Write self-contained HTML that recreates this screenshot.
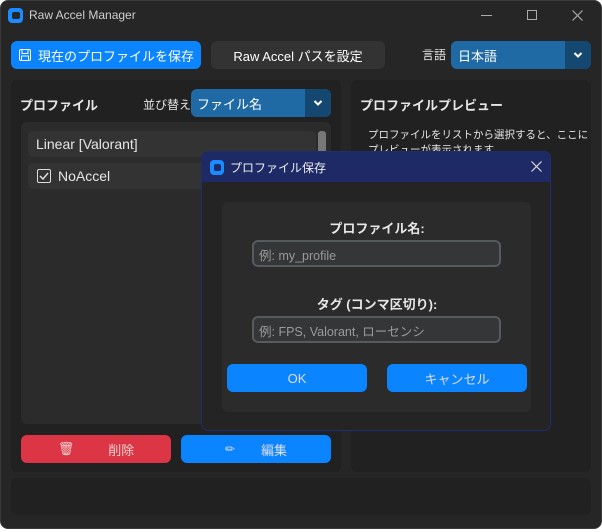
<!DOCTYPE html>
<html><head><meta charset="utf-8"><style>
*{box-sizing:border-box;margin:0;padding:0}
body{width:602px;height:532px;background:#fff;font-family:"Liberation Sans","Noto Sans CJK JP",sans-serif;color:#e6e6e6;position:relative;overflow:hidden}
.a{position:absolute}
.win{left:0;top:0;width:602px;height:529px;background:#262626;border-radius:8px;border:1px solid #3a3a3a}
.btn{position:absolute;display:flex;align-items:center;justify-content:center;border-radius:6px;font-size:13px;color:#fff}
.blue{background:#0a84ff}
.t{position:absolute;white-space:nowrap}
</style></head><body>
<div class="a win"></div>
<div class="a" style="left:8px;top:8px;width:15px;height:15px;background:#1a8cff;border-radius:4px"></div>
<div class="a" style="left:12px;top:12px;width:8px;height:7px;background:#262626;border-radius:2px"></div>
<div class="t" style="left:29px;top:8px;font-size:12px;color:#cfcfcf">Raw Accel Manager</div>
<div class="a" style="left:481px;top:15px;width:11px;height:1px;background:#aaa"></div>
<div class="a" style="left:527px;top:10px;width:10px;height:10px;border:1px solid #aaa"></div>
<svg class="a" style="left:572px;top:10px" width="11" height="11"><path d="M0.5 0.5 L10.5 10.5 M10.5 0.5 L0.5 10.5" stroke="#aaa" stroke-width="1.2"/></svg>
<div class="btn blue" style="left:11px;top:41px;width:190px;height:28px">
<svg width="14" height="14" viewBox="0 0 14 14" style="margin-right:6px"><rect x="1.5" y="1.5" width="11" height="11" rx="1.5" fill="none" stroke="#fff"/><rect x="4" y="1.5" width="6" height="4" fill="none" stroke="#fff"/><rect x="3.5" y="8" width="7" height="4.5" fill="none" stroke="#fff"/></svg>現在のプロファイルを保存</div>
<div class="btn" style="left:211px;top:41px;width:174px;height:28px;background:#333">Raw Accel パスを設定</div>
<div class="t" style="left:422px;top:46px;font-size:12px">言語</div>
<div class="a" style="left:451px;top:41px;width:140px;height:28px;background:#1f6aa5;border-radius:6px;overflow:hidden">
<div class="t" style="left:7px;top:5px;font-size:13px;color:#fff">日本語</div>
<div class="a" style="left:114px;top:0;width:26px;height:28px;background:#144870"></div>
<svg class="a" style="left:122px;top:10px" width="10" height="8"><path d="M1.5 2 L5 5.5 L8.5 2" stroke="#fff" stroke-width="2" fill="none"/></svg></div>
<div class="a" style="left:11px;top:80px;width:330px;height:392px;background:#212121;border-radius:6px"></div>
<div class="t" style="left:20px;top:95px;font-size:13px;font-weight:bold">プロファイル</div>
<div class="t" style="left:143px;top:96px;font-size:12px">並び替え</div>
<div class="a" style="left:191px;top:89px;width:140px;height:28px;background:#1f6aa5;border-radius:6px;overflow:hidden">
<div class="t" style="left:6px;top:5px;font-size:13px;color:#fff">ファイル名</div>
<div class="a" style="left:114px;top:0;width:26px;height:28px;background:#144870"></div>
<svg class="a" style="left:122px;top:10px" width="10" height="8"><path d="M1.5 2 L5 5.5 L8.5 2" stroke="#fff" stroke-width="2" fill="none"/></svg></div>
<div class="a" style="left:21px;top:122px;width:310px;height:302px;background:#2b2b2b;border-radius:6px"></div>
<div class="a" style="left:28px;top:131px;width:288px;height:26px;background:#333;border-radius:5px"></div>
<div class="t" style="left:36px;top:136px;font-size:14px">Linear [Valorant]</div>
<div class="a" style="left:28px;top:163px;width:288px;height:26px;background:#333;border-radius:5px"></div>
<div class="a" style="left:37px;top:169px;width:14px;height:14px;border:1.5px solid #ddd;border-radius:2px"></div>
<svg class="a" style="left:37px;top:169px" width="14" height="14"><path d="M3 7 L6 10 L11 4" stroke="#ddd" stroke-width="1.5" fill="none"/></svg>
<div class="t" style="left:58px;top:168px;font-size:14px">NoAccel</div>
<div class="a" style="left:318px;top:131px;width:8px;height:22px;background:#777;border-radius:3px"></div>
<div class="btn" style="left:21px;top:435px;width:150px;height:28px;background:#dc3545;color:#f2d0d0">
<span style="margin-right:34px;font-size:13px">🗑</span>削除</div>
<div class="btn blue" style="left:181px;top:435px;width:150px;height:28px;color:#dde">
<span style="margin-right:26px;font-size:12px">✏</span>編集</div>
<div class="a" style="left:351px;top:80px;width:240px;height:392px;background:#212121;border-radius:6px"></div>
<div class="t" style="left:360px;top:95px;font-size:13px;font-weight:bold">プロファイルプレビュー</div>
<div class="t" style="left:368px;top:128px;font-size:10.5px;line-height:15px">プロファイルをリストから選択すると、ここに<br>プレビューが表示されます。</div>
<div class="a" style="left:11px;top:478px;width:580px;height:37px;background:#212121;border-radius:6px"></div>
<div class="a" style="left:201px;top:151px;width:350px;height:280px;background:#242424;border:1px solid #1f2e6e;border-radius:7px;overflow:hidden">
<div class="a" style="left:0;top:0;width:350px;height:30px;background:#1e2a66"></div>
<div class="a" style="left:8px;top:8px;width:14px;height:15px;background:#1a8cff;border-radius:4px"></div>
<div class="a" style="left:12px;top:12px;width:7px;height:7px;background:#1e2a66;border-radius:2px"></div>
<div class="t" style="left:28px;top:7px;font-size:12px;color:#eee">プロファイル保存</div>
<svg class="a" style="left:329px;top:9px" width="11" height="11"><path d="M0.5 0.5 L10.5 10.5 M10.5 0.5 L0.5 10.5" stroke="#ddd" stroke-width="1.2"/></svg>
<div class="a" style="left:20px;top:50px;width:309px;height:210px;background:#2b2b2b;border-radius:6px"></div>
<div class="t" style="left:0;width:350px;text-align:center;top:66px;font-size:13px;font-weight:bold">プロファイル名:</div>
<div class="a" style="left:50px;top:88px;width:249px;height:27px;background:#343638;border:2px solid #565b5e;border-radius:6px"></div>
<div class="t" style="left:57px;top:93px;font-size:12.5px;color:#9a9a9a">例: my_profile</div>
<div class="t" style="left:0;width:350px;text-align:center;top:142px;font-size:13px;font-weight:bold">タグ (コンマ区切り):</div>
<div class="a" style="left:50px;top:164px;width:249px;height:27px;background:#343638;border:2px solid #565b5e;border-radius:6px"></div>
<div class="t" style="left:57px;top:169px;font-size:12.5px;color:#9a9a9a">例: FPS, Valorant, ローセンシ</div>
<div class="btn blue" style="left:25px;top:212px;width:140px;height:28px;color:#dde">OK</div>
<div class="btn blue" style="left:185px;top:212px;width:140px;height:28px;color:#dde">キャンセル</div>
</div>
</body></html>
